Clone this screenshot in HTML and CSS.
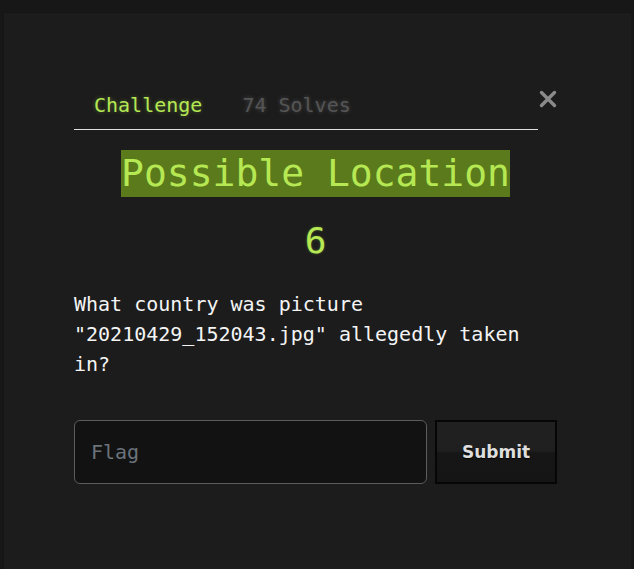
FILE: index.html
```html
<!DOCTYPE html>
<html>
<head>
<meta charset="utf-8">
<link rel="stylesheet" href="styles.css">
</head>
<body>
<div class="modal">
  <div class="header">
    <nav class="tabs">
      <span class="tab active">Challenge</span>
      <span class="tab solves">74 Solves</span>
    </nav>
    <button class="close" aria-label="Close">
      <svg width="18" height="18" viewBox="0 0 18 18"><path d="M2.5 2.5 L15.5 15.5 M15.5 2.5 L2.5 15.5" stroke="#8a8a8a" stroke-width="3.4" stroke-linecap="round" fill="none"/></svg>
    </button>
  </div>
  <div class="title-row"><h2 class="title">Possible Location</h2></div>
  <div class="points">6</div>
  <p class="desc">What country was picture "20210429_152043.jpg" allegedly taken in?</p>
  <form class="flag-form">
    <input class="flag-input" type="text" placeholder="Flag">
    <button class="submit" type="button">Submit</button>
  </form>
</div>
</body>
</html>
```
FILE: styles.css
```css
html, body {
  margin: 0;
  padding: 0;
  height: 100%;
}
body {
  background: #171717;
  font-family: "DejaVu Sans Mono", "Liberation Mono", monospace;
  overflow: hidden;
}
.modal {
  margin: 12px 3px 0 3px;
  height: 557px;
  background: #1c1c1c;
  box-sizing: border-box;
  padding: 74px 74px 0 70px;
  border-top: 1px solid #151515;
  border-left: 1px solid #151515;
}
.header {
  display: flex;
  align-items: flex-start;
}
.tabs {
  width: 464px;
  display: flex;
  border-bottom: 1px solid #e0e0e0;
  box-sizing: border-box;
}
.tab {
  font-size: 20px;
  line-height: 23px;
  padding: 7px 20px 12px 20px;
}
.tab.active {
  color: #b5e853;
  text-shadow: 0 0 4px rgba(181, 232, 83, 0.35);
}
.tab.solves {
  color: #555555;
  text-shadow: 0 0 4px rgba(120, 120, 120, 0.5);
}
.close {
  background: none;
  border: none;
  padding: 0;
  margin: 3px 0 0 1px;
  width: 18px;
  height: 18px;
  display: block;
}
.close svg { display: block; }
.title-row {
  text-align: center;
  margin-top: 20px;
}
.title {
  display: inline-block;
  margin: 0;
  font-weight: normal;
  font-size: 38px;
  line-height: 47px;
  color: #b5e853;
  background: #5b7a1c;
}
.points {
  text-align: center;
  font-size: 36px;
  line-height: 44px;
  margin-top: 22px;
  color: #b5e853;
  text-shadow: 0 0 3px rgba(181, 232, 83, 0.3);
}
.desc {
  margin: 26px 0 0 0;
  font-size: 20px;
  line-height: 30px;
  color: #f4f4f4;
}
.flag-form {
  display: flex;
  gap: 8px;
  margin-top: 41px;
}
.flag-input {
  width: 353px;
  height: 64px;
  box-sizing: border-box;
  background: #121212;
  border: 1px solid #5c5c5c;
  border-radius: 6px;
  padding: 0 16px;
  font-family: "DejaVu Sans Mono", "Liberation Mono", monospace;
  font-size: 20px;
  color: #ddd;
  outline: none;
}
.flag-input::placeholder {
  color: #6b737b;
}
.submit {
  width: 122px;
  height: 64px;
  box-sizing: border-box;
  border: 2px solid #060606;
  background: linear-gradient(#212121 0%, #1f1f1f 48%, #161616 52%, #151515 100%);
  color: #dedede;
  font-family: "DejaVu Sans", Verdana, sans-serif;
  font-weight: bold;
  font-size: 17px;
  text-shadow: 0 1px 1px #000;
  padding: 0;
}
```
